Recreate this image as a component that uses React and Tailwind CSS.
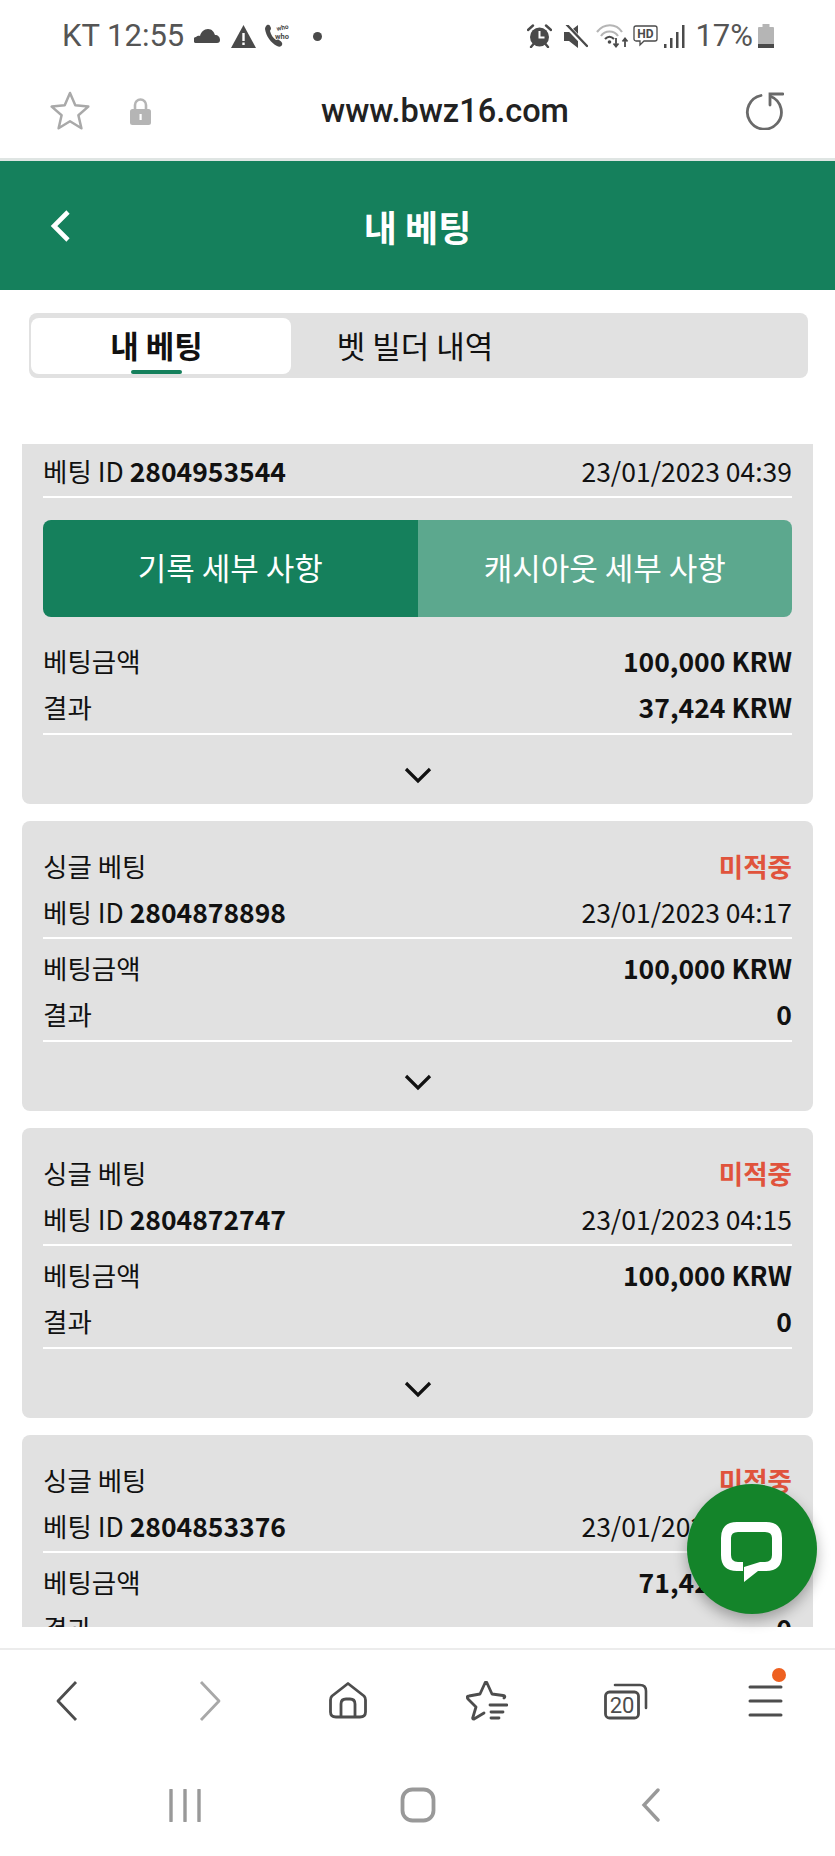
const krFont = "font-['Noto_Sans_CJK_KR','Noto_Sans',sans-serif]";

function Cloud() {
  return (
    <svg width="26" height="14" viewBox="0 0 26 14" className="ml-[10px]">
      <path d="M3 14a3 3 0 0 1-1-6c1-1 3-1.500 4-1C7 3 10 0 14 0c4 0 6 3 7 6 3 0 5 2 5 5 0 2-1 3-3 3Z" fill="#4a4a4a" />
    </svg>
  );
}

function Warning() {
  return (
    <svg width="25" height="23" viewBox="0 0 25 23" className="ml-[11px]">
      <path d="M12.500 0 25 23H0Z" fill="#4a4a4a" />
      <rect x="11.300" y="8" width="2.400" height="8" fill="#fff" />
      <rect x="11.300" y="17.500" width="2.400" height="2.500" fill="#fff" />
    </svg>
  );
}

function WhoWho() {
  return (
    <svg width="30" height="24" viewBox="0 0 30 24" className="ml-[9px]">
      <path d="M2 1c2-1 3 0 4 3 0 2-1 2-1 3 1 4 3 7 6 9 1 0 2-1 3 0 2 1 4 3 3 5-1 2-3 2-5 1C6 19 1 12 0 5c0-2 1-3 2-4Z" fill="#4a4a4a" />
      <text x="12" y="7" fontSize="6.500" fontWeight="700" fill="#4a4a4a" fontFamily="Roboto, sans-serif" transform="rotate(-12 12 7)">who</text>
      <text x="10" y="15" fontSize="7.500" fontWeight="700" fill="#4a4a4a" fontFamily="Roboto, sans-serif">who</text>
    </svg>
  );
}

function Alarm() {
  return (
    <svg width="25" height="24" viewBox="0 0 25 24">
      <circle cx="12.500" cy="13" r="9.500" fill="#4a4a4a" />
      <path d="M12.500 7v6.500h5" fill="none" stroke="#fff" strokeWidth="2" />
      <path d="M1 6 6 1.500M24 6 19 1.500M4 23l2.500-3M21 23l-2.500-3" stroke="#4a4a4a" strokeWidth="2.400" strokeLinecap="round" />
    </svg>
  );
}

function Mute() {
  return (
    <svg width="24" height="23" viewBox="0 0 24 23">
      <path d="M0 7h5l9-7v23l-9-7H0Z" fill="#4a4a4a" />
      <path d="M2 0 23 22" stroke="#fff" strokeWidth="5" />
      <path d="M3 0 23 21" stroke="#4a4a4a" strokeWidth="2.400" strokeLinecap="round" />
    </svg>
  );
}

function Wifi() {
  return (
    <svg width="33" height="24" viewBox="0 0 33 24">
      <path d="M1 8c7-9 19-9 25 0" fill="none" stroke="#b5b5b5" strokeWidth="2.200" />
      <path d="M5 12c4-6 13-6 17 0" fill="none" stroke="#b5b5b5" strokeWidth="2.200" />
      <path d="M9 15c3-3 6-3 9 0" fill="none" stroke="#4a4a4a" strokeWidth="2.200" />
      <circle cx="13.500" cy="18" r="1.800" fill="#4a4a4a" />
      <path d="M20 14v8m-2.500-2.500 2.500 3 2.500-3" fill="none" stroke="#4a4a4a" strokeWidth="1.800" />
      <path d="M29 23v-8m-2.500 2.500 2.500-3 2.500 3" fill="none" stroke="#4a4a4a" strokeWidth="1.800" />
    </svg>
  );
}

function Hd() {
  return (
    <svg width="25" height="22" viewBox="0 0 25 22">
      <path d="M3 1h19a2 2 0 0 1 2 2v11a2 2 0 0 1-2 2H11l-4 4v-4H3a2 2 0 0 1-2-2V3a2 2 0 0 1 2-2Z" fill="#fff" stroke="#4a4a4a" strokeWidth="1.300" />
      <text x="12.500" y="13" textAnchor="middle" fontSize="12" fontWeight="700" fill="#4a4a4a" fontFamily="Roboto, sans-serif">HD</text>
    </svg>
  );
}

function Signal() {
  return (
    <svg width="21" height="23" viewBox="0 0 21 23" fill="#4a4a4a">
      <rect x="0" y="19" width="2.500" height="4" />
      <rect x="6" y="13" width="2.500" height="10" />
      <rect x="12" y="7" width="2.500" height="16" />
      <rect x="18" y="0" width="2.500" height="23" />
    </svg>
  );
}

function Battery() {
  return (
    <svg width="16" height="24" viewBox="0 0 16 24">
      <rect x="4.500" y="0" width="7" height="3" fill="#b5b5b5" />
      <rect x="0" y="3" width="16" height="21" rx="1" fill="#b5b5b5" />
      <rect x="0" y="20" width="16" height="4" fill="#4a4a4a" />
    </svg>
  );
}

function StatusBar() {
  return (
    <div className="flex items-center h-[70px] pt-[2px] pl-[62px] pr-[61px] font-['Roboto',sans-serif] text-[31px] text-[#555555] bg-white">
      <span className="whitespace-nowrap">KT 12:55</span>
      <Cloud />
      <Warning />
      <WhoWho />
      <span className="ml-[18px] w-[9px] h-[9px] rounded-full bg-[#4a4a4a]"></span>
      <div className="ml-auto flex items-center">
        <Alarm />
        <div className="ml-[12px]"><Mute /></div>
        <div className="ml-[8px]"><Wifi /></div>
        <div className="ml-[4px]"><Hd /></div>
        <div className="ml-[6px]"><Signal /></div>
        <span className="ml-[10px] whitespace-nowrap">17%</span>
        <div className="ml-[5px]"><Battery /></div>
      </div>
    </div>
  );
}

function BrowserBar() {
  return (
    <div className="relative flex items-center h-[91px] pb-[6px] pl-[50px] pr-[51px] bg-white border-b-[3px] border-[#dfe5e3]">
      <svg width="40" height="40" viewBox="0 0 40 40" className="shrink-0">
        <path d="M20 2l5.300 12.300 13 1.300-9.900 8.700 3 13L20 30.300 8.600 37.300l3-13-9.900-8.700 13-1.300Z" fill="none" stroke="#a9a9a9" strokeWidth="2.500" strokeLinejoin="round" />
      </svg>
      <svg width="21" height="27" viewBox="0 0 21 27" className="shrink-0 ml-[40px]">
        <path d="M5 12V7a5.500 5.500 0 0 1 11 0v5" fill="none" stroke="#b5b5b5" strokeWidth="2.600" />
        <rect x="0" y="11" width="21" height="16" rx="2.500" fill="#b5b5b5" />
        <rect x="9.500" y="16" width="2.200" height="6" fill="#fff" />
      </svg>
      <span className="flex-1 pr-[6px] text-center font-['Roboto',sans-serif] font-medium text-[32.500px] leading-[40px] text-[#222222]">
        www.bwz16.com
      </span>
      <svg width="39" height="38" viewBox="0 0 39 38" className="shrink-0">
        <path d="M16 3.500A17 17 0 1 0 26 4.500" fill="none" stroke="#6a6a6a" strokeWidth="2.800" strokeLinecap="round" />
        <path d="M25 13V2h13" fill="none" stroke="#6a6a6a" strokeWidth="2.800" strokeLinecap="round" />
      </svg>
    </div>
  );
}

function PageHeader() {
  return (
    <div className="relative flex items-center justify-center h-[129px] bg-[#15805c]">
      <svg width="22" height="34" viewBox="0 0 22 34" className="absolute left-[49px] top-[48px]">
        <path d="M19 3 5 17l14 14" fill="none" stroke="#ffffff" strokeWidth="4.600" />
      </svg>
      <span className={`${krFont} text-white font-bold text-[36px] leading-none`}>내 베팅</span>
    </div>
  );
}

function Tabs() {
  return (
    <div className="h-[154px] pt-[23px] pl-[29px] pr-[27px] bg-white">
      <div className={`${krFont} flex h-[65px] pt-[5px] pb-[4px] pl-[2px] rounded-lg bg-[#e1e1e1] text-[31px] text-[#111111]`}>
        <div className="relative flex items-center justify-center w-[260px] pr-[9px] pb-[2px] rounded-lg bg-white font-bold">
          내 베팅
          <span className="absolute bottom-0 left-[100px] w-[51px] h-[4px] rounded-sm bg-[#15805c]"></span>
        </div>
        <div className="flex items-center justify-center w-[248px] pb-[2px]">벳 빌더 내역</div>
      </div>
    </div>
  );
}

function Row({ left, right }) {
  return (
    <div className="flex items-center justify-between h-[46px] pb-[4px] whitespace-nowrap">
      <div>{left}</div>
      <div>{right}</div>
    </div>
  );
}

function Divider() {
  return <div className="h-[2px] bg-white"></div>;
}

function Chevron() {
  return (
    <div className="flex justify-center h-[69px] pt-[32px]">
      <svg width="28" height="17" viewBox="0 0 28 17">
        <path d="M2 2l12 12L26 2" fill="none" stroke="#111111" strokeWidth="3.200" />
      </svg>
    </div>
  );
}

function Amounts({ stake, result }) {
  return (
    <>
      <Row left="베팅금액" right={<b className="font-bold">{stake}</b>} />
      <Row left="결과" right={<b className="font-bold">{result}</b>} />
      <div className="mt-[1px]">
        <Divider />
      </div>
    </>
  );
}

function BetCard({ id, date, stake, result }) {
  return (
    <div className="shrink-0 pt-[24px] px-[21px] rounded-lg bg-[#e1e1e1]">
      <Row left="싱글 베팅" right={<b className="font-bold text-[#e0533c]">미적중</b>} />
      <Row left={<>베팅 ID <b className="font-bold">{id}</b></>} right={date} />
      <Divider />
      <div className="mt-[8px]">
        <Amounts stake={stake} result={result} />
      </div>
      <Chevron />
    </div>
  );
}

function FirstCard() {
  return (
    <div className="shrink-0 pt-[6px] px-[21px] rounded-b-lg bg-[#e1e1e1]">
      <Row left={<>베팅 ID <b className="font-bold">2804953544</b></>} right="23/01/2023 04:39" />
      <Divider />
      <div className="flex h-[97px] mt-[22px] rounded-lg overflow-hidden text-white text-[31px]">
        <div className="flex flex-1 items-center justify-center pb-[2px] bg-[#15805c]">기록 세부 사항</div>
        <div className="flex flex-1 items-center justify-center pb-[2px] bg-[#5ca88e]">캐시아웃 세부 사항</div>
      </div>
      <div className="mt-[23px]">
        <Amounts stake="100,000 KRW" result="37,424 KRW" />
      </div>
      <Chevron />
    </div>
  );
}

function ChatButton() {
  return (
    <div className="absolute right-[18px] top-[1484px] flex items-center justify-center w-[130px] h-[130px] pt-[6px] pr-[1px] rounded-full bg-[#14842a] shadow-[0_6px_14px_rgba(0,0,0,0.3)]">
      <svg width="61" height="60" viewBox="0 0 61 60">
        <path d="M22 49H16Q0 49 0 33V16Q0 0 16 0H45Q61 0 61 16V33Q61 49 45 49H37L23 60V45L39 40H44Q51 40 51 33V16Q51 10 44 10H17Q10 10 10 16V33Q10 40 17 40H22Z" fill="#ffffff" />
      </svg>
    </div>
  );
}

function BottomBar() {
  return (
    <div className="grid grid-cols-6 items-center h-[112px] pb-[9px] bg-white border-t-[2px] border-[#ececec]">
      <div className="flex justify-center pr-[5px]">
        <svg width="22" height="40" viewBox="0 0 22 40"><path d="M20 1 2 20l18 19" fill="none" stroke="#4d4d4d" strokeWidth="2.800" strokeLinejoin="round" /></svg>
      </div>
      <div className="flex justify-center pl-[3px]">
        <svg width="22" height="40" viewBox="0 0 22 40"><path d="M2 1l18 19L2 39" fill="none" stroke="#a8a8a8" strokeWidth="2.800" strokeLinejoin="round" /></svg>
      </div>
      <div className="flex justify-center">
        <svg width="38" height="37" viewBox="0 0 38 37">
          <path d="M19 1.500 3 14Q1.500 15.500 1.500 18V30Q1.500 35 7 35H31Q36.500 35 36.500 30V18Q36.500 15.500 35 14Z" fill="none" stroke="#4d4d4d" strokeWidth="2.800" strokeLinejoin="round" />
          <path d="M12 35V22Q12 17 17 17H21Q26 17 26 22V35" fill="none" stroke="#4d4d4d" strokeWidth="2.800" />
        </svg>
      </div>
      <div className="flex justify-center">
        <svg width="42" height="40" viewBox="0 0 42 40">
          <path d="M18 32 8 38Q6 38 7 36L10 26 2 18Q0 15 3 15L14 13 19 2Q20 0 21 2L26 13 37 14.500Q40 15 38 17" fill="none" stroke="#4d4d4d" strokeWidth="2.800" strokeLinejoin="round" strokeLinecap="round" />
          <path d="M24 24h17M25 31h12M25 37h8" fill="none" stroke="#4d4d4d" strokeWidth="2.800" strokeLinecap="round" />
        </svg>
      </div>
      <div className="flex justify-center">
        <svg width="44" height="38" viewBox="0 0 44 38">
          <path d="M11 3H36Q42 3 42 9V26" fill="none" stroke="#4d4d4d" strokeWidth="2.600" strokeLinecap="round" />
          <rect x="1.500" y="10" width="33" height="26" rx="4" fill="none" stroke="#4d4d4d" strokeWidth="2.800" />
          <text x="18" y="31" textAnchor="middle" fontSize="22" fill="#4d4d4d" fontFamily="Roboto, sans-serif">20</text>
        </svg>
      </div>
      <div className="relative flex justify-center">
        <svg width="35" height="32" viewBox="0 0 35 32">
          <path d="M2 2h31M2 16h31M2 30h31" stroke="#4d4d4d" strokeWidth="3" strokeLinecap="round" />
        </svg>
        <span className="absolute left-[76px] top-[-17px] w-[14px] h-[14px] rounded-full bg-[#ee6020]"></span>
      </div>
    </div>
  );
}

function NavBar() {
  return (
    <div className="grid grid-cols-3 items-center justify-items-center h-[94px] mx-[68px] pb-[4px]">
      <svg width="32" height="33" viewBox="0 0 32 33">
        <path d="M2 1v31M16 1v31M30 1v31" stroke="#999999" strokeWidth="3.400" strokeLinecap="round" />
      </svg>
      <svg width="36" height="36" viewBox="0 0 36 36">
        <rect x="2.500" y="2.500" width="31" height="31" rx="10" fill="none" stroke="#999999" strokeWidth="3.800" />
      </svg>
      <svg width="20" height="34" viewBox="0 0 20 34">
        <path d="M17 2 3 17l14 15" fill="none" stroke="#999999" strokeWidth="3.400" strokeLinecap="round" />
      </svg>
    </div>
  );
}

export default function App() {
  return (
    <div className="relative w-[835px] h-[1856px] overflow-hidden bg-white">
      <StatusBar />
      <BrowserBar />
      <PageHeader />
      <Tabs />
      <div className={`${krFont} flex flex-col gap-[17px] h-[1183px] mx-[22px] overflow-hidden text-[26.500px] text-[#111111]`}>
        <FirstCard />
        <BetCard id="2804878898" date="23/01/2023 04:17" stake="100,000 KRW" result="0" />
        <BetCard id="2804872747" date="23/01/2023 04:15" stake="100,000 KRW" result="0" />
        <BetCard id="2804853376" date="23/01/2023 03:58" stake="71,428 KRW" result="0" />
      </div>
      <div className="h-[21px]"></div>
      <BottomBar />
      <NavBar />
      <ChatButton />
    </div>
  );
}
